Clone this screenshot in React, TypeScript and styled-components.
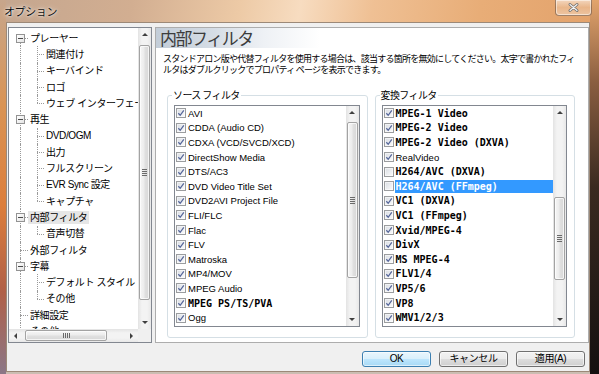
import React from "react";
import styled, { createGlobalStyle, css } from "styled-components";

type Dir = "up" | "down" | "left" | "right";

const GlobalStyle = createGlobalStyle`
  html, body { margin: 0; padding: 0; }
  body {
    width: 599px;
    height: 374px;
    overflow: hidden;
    background: #1c1612;
    font-family: "Liberation Sans", "Noto Sans CJK JP", sans-serif;
  }
  * { box-sizing: border-box; }
`;

const Window = styled.div`
  width: 599px;
  height: 374px;
  display: flex;
  flex-direction: column;
  background:
    linear-gradient(180deg, #e2a46c 0%, #8a5e40 22%, #3a2a20 50%, #141010 100%) right top / 9px 100% no-repeat,
    linear-gradient(180deg, #c7a68c 0%, #d99455 28%, #dc7e3c 55%, #b06048 78%, #8b7787 100%) left top / 6px 100% no-repeat,
    linear-gradient(100deg, #c4a68f 0%, #d2ae91 22%, #edcaa6 40%, #f7dcc0 50%, #efc094 62%, #e8ad77 80%, #e3a26b 100%) left top / 100% 22px no-repeat,
    #cbbdb2;
`;

const TitleBar = styled.div`
  height: 22px;
  flex-shrink: 0;
  display: flex;
  align-items: flex-start;
  padding: 0 7px 0 4px;
`;

const Title = styled.span`
  margin-top: 4px;
  font-family: "Noto Sans CJK JP", sans-serif;
  font-size: 11px;
  line-height: 15px;
  letter-spacing: -0.4px;
  color: #111;
  text-shadow: 0 0 5px rgba(255, 255, 255, 0.9), 0 0 2px rgba(255, 255, 255, 0.9);
`;

const CloseButton = styled.div`
  margin-left: auto;
  width: 37px;
  height: 16px;
  border: 1px solid rgba(90, 60, 40, 0.55);
  border-top: none;
  border-radius: 0 0 4px 4px;
  background: linear-gradient(180deg, rgba(255, 255, 255, 0.55), rgba(255, 255, 255, 0.2) 50%, rgba(255, 255, 255, 0.35));
  box-shadow: inset 0 0 0 1px rgba(255, 255, 255, 0.5);
  display: flex;
  align-items: center;
  justify-content: center;
`;

const Client = styled.div`
  flex: 1;
  margin: 0 9px 2px 6px;
  border: 1px solid #9c8978;
  background: #f0f0f0;
  padding: 4px 0 0 1px;
  display: flex;
  flex-direction: column;
`;

const Body = styled.div`
  height: 316px;
  display: flex;
  gap: 3px;
`;

/* ---------- scrollbars ---------- */

const arrowCss = (dir: Dir) => {
  switch (dir) {
    case "up":
      return css`border-left: 3px solid transparent; border-right: 3px solid transparent; border-bottom: 3px solid #404040;`;
    case "down":
      return css`border-left: 3px solid transparent; border-right: 3px solid transparent; border-top: 3px solid #404040;`;
    case "left":
      return css`border-top: 3px solid transparent; border-bottom: 3px solid transparent; border-right: 3px solid #404040;`;
    default:
      return css`border-top: 3px solid transparent; border-bottom: 3px solid transparent; border-left: 3px solid #404040;`;
  }
};

const VBar = styled.div`
  width: 13px;
  display: flex;
  flex-direction: column;
  background: linear-gradient(90deg, #e3e3e3, #f3f3f3 30%, #f3f3f3 70%, #e8e8e8);
`;

const HBar = styled.div`
  height: 13px;
  display: flex;
  background: linear-gradient(180deg, #e3e3e3, #f3f3f3 30%, #f3f3f3 70%, #e8e8e8);
`;

const ArrowCell = styled.div`
  flex: 0 0 13px;
  display: flex;
  align-items: center;
  justify-content: center;
`;

const Arrow = styled.span<{ $dir: Dir }>`
  width: 0;
  height: 0;
  ${(p) => arrowCss(p.$dir)}
`;

const VTrack = styled.div`
  flex: 1;
  display: flex;
  flex-direction: column;
  padding: 0 1px;
`;

const HTrack = styled.div`
  flex: 1;
  display: flex;
  padding: 1px 0;
`;

const VThumb = styled.div<{ $offset: number; $size: number }>`
  margin-top: ${(p) => p.$offset}px;
  height: ${(p) => p.$size}px;
  border: 1px solid #a3a3a3;
  border-radius: 2px;
  background: linear-gradient(90deg, #f6f6f6, #ececec 45%, #e0e0e0 55%, #d8d8d8);
  box-shadow: inset 0 0 0 1px rgba(255, 255, 255, 0.7);
  display: flex;
  align-items: center;
  justify-content: center;
`;

const HThumb = styled.div<{ $offset: number; $size: number }>`
  margin-left: ${(p) => p.$offset}px;
  width: ${(p) => p.$size}px;
  border: 1px solid #a3a3a3;
  border-radius: 2px;
  background: linear-gradient(180deg, #f6f6f6, #ececec 45%, #e0e0e0 55%, #d8d8d8);
  box-shadow: inset 0 0 0 1px rgba(255, 255, 255, 0.7);
  display: flex;
  align-items: center;
  justify-content: center;
`;

const VGrip = styled.span`
  width: 5px;
  height: 7px;
  background: repeating-linear-gradient(180deg, #6a6a6a 0 1px, transparent 1px 2px);
`;

const HGrip = styled.span`
  width: 7px;
  height: 5px;
  background: repeating-linear-gradient(90deg, #6a6a6a 0 1px, transparent 1px 2px);
`;

function VScroll({ offset, size }: { offset: number; size: number }) {
  return (
    <VBar>
      <ArrowCell><Arrow $dir="up" /></ArrowCell>
      <VTrack>
        <VThumb $offset={offset} $size={size}><VGrip /></VThumb>
      </VTrack>
      <ArrowCell><Arrow $dir="down" /></ArrowCell>
    </VBar>
  );
}

function HScroll({ offset, size }: { offset: number; size: number }) {
  return (
    <HBar>
      <ArrowCell><Arrow $dir="left" /></ArrowCell>
      <HTrack>
        <HThumb $offset={offset} $size={size}><HGrip /></HThumb>
      </HTrack>
      <ArrowCell><Arrow $dir="right" /></ArrowCell>
    </HBar>
  );
}

/* ---------- tree ---------- */

const TreePanel = styled.div`
  width: 144px;
  border: 1px solid #828790;
  background: #fff;
  display: grid;
  grid-template-columns: 1fr 13px;
  grid-template-rows: 1fr 13px;
  overflow: hidden;
`;

const TreeBody = styled.div`
  min-width: 0;
  overflow: hidden;
  padding-top: 2px;
  font-family: "Liberation Sans", "Noto Sans CJK JP", sans-serif;
`;

const Corner = styled.div`
  background: #f0f0f0;
`;

const Row = styled.div`
  height: 16.3px;
  display: flex;
  white-space: nowrap;
`;

const Rail = styled.span<{ $line: boolean }>`
  position: relative;
  flex: 0 0 19px;
  &::before {
    content: "";
    display: ${(p) => (p.$line ? "block" : "none")};
    position: absolute;
    left: 11px;
    top: 0;
    bottom: 0;
    border-left: 1px dotted #9a9a9a;
  }
`;

const Joint = styled.span<{ $w: number; $x: number; $first?: boolean; $last?: boolean }>`
  position: relative;
  flex: 0 0 ${(p) => p.$w}px;
  &::before {
    content: "";
    position: absolute;
    left: ${(p) => p.$x}px;
    top: ${(p) => (p.$first ? "50%" : "0")};
    bottom: ${(p) => (p.$last ? "50%" : "0")};
    border-left: 1px dotted #9a9a9a;
  }
  &::after {
    content: "";
    position: absolute;
    left: ${(p) => p.$x}px;
    right: 0;
    top: 8px;
    border-top: 1px dotted #9a9a9a;
  }
`;

const Expander = styled.span`
  position: absolute;
  z-index: 1;
  left: 7px;
  top: 4px;
  width: 9px;
  height: 9px;
  border: 1px solid #939393;
  background: linear-gradient(135deg, #ffffff, #e4e4e4);
  &::after {
    content: "";
    position: absolute;
    left: 1px;
    right: 1px;
    top: 3px;
    height: 1px;
    background: #4a4a4a;
  }
`;

const NodeLabel = styled.span<{ $selected?: boolean }>`
  align-self: center;
  height: 13px;
  padding: 0 2px;
  font-size: 10px;
  line-height: 13px;
  letter-spacing: -0.4px;
  color: #000;
  background: ${(p) => (p.$selected ? "#e6e6e6" : "transparent")};
`;

type TreeNode = { label: string; selected?: boolean; children?: string[] };

const tree: TreeNode[] = [
  { label: "プレーヤー", children: ["関連付け", "キーバインド", "ロゴ", "ウェブ インターフェース"] },
  { label: "再生", children: ["DVD/OGM", "出力", "フルスクリーン", "EVR Sync 設定", "キャプチャ"] },
  { label: "内部フィルタ", selected: true, children: ["音声切替"] },
  { label: "外部フィルタ" },
  { label: "字幕", children: ["デフォルト スタイル", "その他"] },
  { label: "詳細設定" },
  { label: "その他" },
];

function TreeItem({ node, first, last }: { node: TreeNode; first: boolean; last: boolean }) {
  const kids = node.children ?? [];
  return (
    <>
      <Row>
        <Joint $w={19} $x={11} $first={first} $last={last}>
          {kids.length > 0 && <Expander />}
        </Joint>
        <NodeLabel $selected={node.selected}>{node.label}</NodeLabel>
      </Row>
      {kids.map((c, i) => (
        <Row key={c}>
          <Rail $line={!last} />
          <Joint $w={16} $x={9} $last={i === kids.length - 1} />
          <NodeLabel>{c}</NodeLabel>
        </Row>
      ))}
    </>
  );
}

/* ---------- right panel ---------- */

const Panel = styled.section`
  flex: 1;
  border: 1px solid #adadad;
  background: #fff;
  display: flex;
  flex-direction: column;
`;

const PanelHeader = styled.h1`
  margin: 0;
  height: 20px;
  padding-left: 4px;
  font-family: "Noto Sans CJK JP", sans-serif;
  font-weight: 400;
  font-size: 17px;
  line-height: 20px;
  letter-spacing: -1.5px;
  color: #3c3c3c;
  background: linear-gradient(90deg, #c3cdd8 0%, #d3dbe4 12%, #eef1f5 25%, #ffffff 38%);
`;

const Desc = styled.p`
  margin: 5px 0 0;
  padding-left: 7px;
  font-family: "Noto Sans CJK JP", sans-serif;
  font-size: 9px;
  line-height: 11px;
  letter-spacing: -0.75px;
  color: #000;
  white-space: nowrap;
`;

const Groups = styled.div`
  margin-top: 14px;
  display: flex;
  gap: 7px;
  padding: 0 13px 0 11px;
`;

const Group = styled.fieldset`
  flex: 1;
  min-width: 0;
  margin: 0;
  padding: 4px 7px 10px 6px;
  border: 1px solid #d5dfe5;
  border-radius: 3px;
`;

const Legend = styled.legend`
  margin-left: -2px;
  padding: 0 1px;
  font-family: "Noto Sans CJK JP", sans-serif;
  font-size: 10px;
  line-height: 12px;
  letter-spacing: -0.6px;
  color: #000;
`;

const ListBox = styled.div`
  height: 222px;
  border: 1px solid #828790;
  background: #fff;
  display: grid;
  grid-template-columns: 1fr 13px;
  overflow: hidden;
`;

const Items = styled.div`
  min-width: 0;
  display: flex;
  flex-direction: column;
`;

const Item = styled.div`
  height: 14.6px;
  flex-shrink: 0;
  display: flex;
  align-items: center;
  padding-left: 1px;
`;

const Check = styled.span`
  flex: 0 0 10px;
  height: 10px;
  border: 1px solid #9b9d9f;
  background: linear-gradient(135deg, #d8dce2 0%, #eceef1 55%, #fbfbfb 100%);
  box-shadow: inset 0 0 0 1px rgba(255, 255, 255, 0.55);
  display: flex;
  align-items: center;
  justify-content: center;
`;

const ItemLabel = styled.span<{ $bold?: boolean; $selected?: boolean }>`
  flex: 1;
  height: 13px;
  margin-left: 1px;
  padding-left: 1px;
  white-space: nowrap;
  font-family: ${(p) => (p.$bold ? '"DejaVu Sans Mono", monospace' : '"Liberation Sans", sans-serif')};
  font-weight: ${(p) => (p.$bold ? 700 : 400)};
  font-size: ${(p) => (p.$bold ? "10px" : "9.5px")};
  line-height: 13px;
  color: ${(p) => (p.$selected ? "#fff" : "#000")};
  background: ${(p) => (p.$selected ? "#3399ff" : "transparent")};
`;

type Filter = { name: string; on: boolean; bold?: boolean; selected?: boolean };

const sourceFilters: Filter[] = [
  { name: "AVI", on: true },
  { name: "CDDA (Audio CD)", on: true },
  { name: "CDXA (VCD/SVCD/XCD)", on: true },
  { name: "DirectShow Media", on: true },
  { name: "DTS/AC3", on: true },
  { name: "DVD Video Title Set", on: true },
  { name: "DVD2AVI Project File", on: true },
  { name: "FLI/FLC", on: true },
  { name: "Flac", on: true },
  { name: "FLV", on: true },
  { name: "Matroska", on: true },
  { name: "MP4/MOV", on: true },
  { name: "MPEG Audio", on: true },
  { name: "MPEG PS/TS/PVA", on: true, bold: true },
  { name: "Ogg", on: true },
];

const transformFilters: Filter[] = [
  { name: "MPEG-1 Video", on: true, bold: true },
  { name: "MPEG-2 Video", on: true, bold: true },
  { name: "MPEG-2 Video (DXVA)", on: true, bold: true },
  { name: "RealVideo", on: true },
  { name: "H264/AVC (DXVA)", on: false, bold: true },
  { name: "H264/AVC (FFmpeg)", on: false, bold: true, selected: true },
  { name: "VC1 (DXVA)", on: true, bold: true },
  { name: "VC1 (FFmpeg)", on: true, bold: true },
  { name: "Xvid/MPEG-4", on: true, bold: true },
  { name: "DivX", on: true, bold: true },
  { name: "MS MPEG-4", on: true, bold: true },
  { name: "FLV1/4", on: true, bold: true },
  { name: "VP5/6", on: true, bold: true },
  { name: "VP8", on: true, bold: true },
  { name: "WMV1/2/3", on: true, bold: true },
];

function CheckMark() {
  return (
    <svg width="8" height="8" viewBox="0 0 8 8">
      <path d="M1.3 4.3 L3.2 6.3 L6.8 1.4" fill="none" stroke="#56679a" strokeWidth="1.25" />
    </svg>
  );
}

function FilterList({ items, offset, size }: { items: Filter[]; offset: number; size: number }) {
  return (
    <ListBox>
      <Items>
        {items.map((f) => (
          <Item key={f.name}>
            <Check>{f.on && <CheckMark />}</Check>
            <ItemLabel $bold={f.bold} $selected={f.selected}>{f.name}</ItemLabel>
          </Item>
        ))}
      </Items>
      <VScroll offset={offset} size={size} />
    </ListBox>
  );
}

/* ---------- footer ---------- */

const Footer = styled.div`
  display: flex;
  justify-content: flex-end;
  gap: 8px;
  padding: 8px 4px 0 0;
`;

const Button = styled.button<{ $default?: boolean }>`
  width: 69px;
  height: 16px;
  padding: 0;
  border: 1px solid ${(p) => (p.$default ? "#3c7fb1" : "#707070")};
  border-radius: 3px;
  background: ${(p) =>
    p.$default
      ? "linear-gradient(180deg, #eaf6fd 0%, #d9f0fc 50%, #bee6fd 51%, #a7d9f5 100%)"
      : "linear-gradient(180deg, #f2f2f2 0%, #ebebeb 50%, #dddddd 51%, #cfcfcf 100%)"};
  box-shadow: inset 0 0 0 1px rgba(255, 255, 255, 0.6);
  font-family: "Liberation Sans", "Noto Sans CJK JP", sans-serif;
  font-size: 10px;
  line-height: 14px;
  letter-spacing: -0.4px;
  color: #000;
`;

export default function App() {
  return (
    <Window>
      <GlobalStyle />
      <TitleBar>
        <Title>オプション</Title>
        <CloseButton>
          <svg width="11" height="9" viewBox="0 0 11 9">
            <path d="M2 1.5 L9 7.5 M9 1.5 L2 7.5" stroke="#6d6d6d" strokeWidth="2.8" strokeLinecap="round" />
            <path d="M2 1.5 L9 7.5 M9 1.5 L2 7.5" stroke="#f4f4f4" strokeWidth="1.2" strokeLinecap="round" />
          </svg>
        </CloseButton>
      </TitleBar>
      <Client>
        <Body>
          <TreePanel>
            <TreeBody>
              {tree.map((n, i) => (
                <TreeItem key={n.label + i} node={n} first={i === 0} last={i === tree.length - 1} />
              ))}
            </TreeBody>
            <VScroll offset={4} size={255} />
            <HScroll offset={3} size={82} />
            <Corner />
          </TreePanel>
          <Panel>
            <PanelHeader>内部フィルタ</PanelHeader>
            <Desc>
              スタンドアロン版や代替フィルタを使用する場合は、該当する箇所を無効にしてください。太字で書かれたフィ
              <br />
              ルタはダブルクリックでプロパティ ページを表示できます。
            </Desc>
            <Groups>
              <Group>
                <Legend>ソース フィルタ</Legend>
                <FilterList items={sourceFilters} offset={3} size={156} />
              </Group>
              <Group>
                <Legend>変換フィルタ</Legend>
                <FilterList items={transformFilters} offset={78} size={83} />
              </Group>
            </Groups>
          </Panel>
        </Body>
        <Footer>
          <Button $default>OK</Button>
          <Button>キャンセル</Button>
          <Button>適用(A)</Button>
        </Footer>
      </Client>
    </Window>
  );
}
